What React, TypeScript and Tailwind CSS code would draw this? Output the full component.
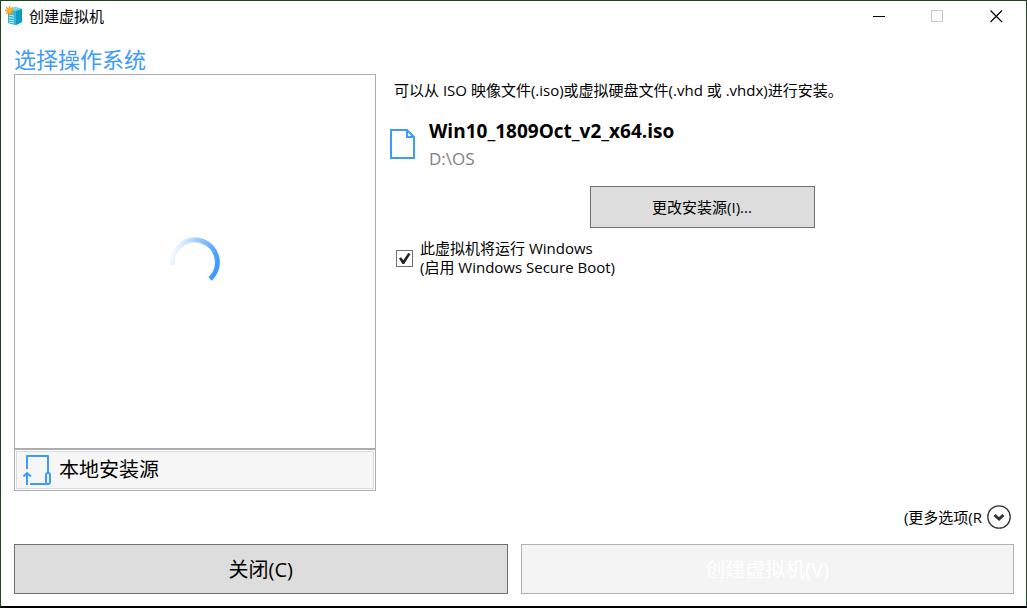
import React, { useState } from "react";

function AppIcon() {
  return (
    <svg width="18" height="20" viewBox="0 0 18 20" aria-hidden="true">
      <path d="M3 5 L10 1 L17 3 L17 16 L11 19 L3 17Z" fill="#22b8d8" />
      <path d="M10 1 L17 3 L11 5 L4 3.500Z" fill="#6fdcee" />
      <path d="M11 5 L17 3 L17 16 L11 19Z" fill="#0a9cc0" />
      <path d="M3 4 L11 5 L11 19 L3 17Z" fill="#35b4d6" />
      <path d="M4 9 L9 10 M4 11.500 L9 12.500 M4 14 L9 15 M4 16 L9 17" stroke="#c5eef7" strokeWidth="1" />
      <path d="M4.500 0 V9 M0 4.500 H9 M1.300 1.300 L7.700 7.700 M7.700 1.300 L1.300 7.700" stroke="#f59d12" strokeWidth="1.300" />
      <circle cx="4.500" cy="4.500" r="2.300" fill="#ffb52e" />
    </svg>
  );
}

function Spinner() {
  return (
    <svg width="50" height="50" viewBox="0 0 50 50" role="img" aria-label="正在加载">
      <defs>
        <linearGradient id="arc" x1="0" y1="0.35" x2="1" y2="0.65">
          <stop offset="0" stopColor="#3d9aff" stopOpacity="0.04" />
          <stop offset="0.4" stopColor="#3d9aff" stopOpacity="0.5" />
          <stop offset="1" stopColor="#3d9aff" />
        </linearGradient>
      </defs>
      <path d="M2.500 28 A22.500 22.500 0 1 1 40 42" fill="none" stroke="url(#arc)" strokeWidth="5" />
    </svg>
  );
}

function InstallIcon() {
  return (
    <svg width="28" height="32" viewBox="0 0 28 32" fill="none" stroke="#3d9aff" strokeWidth="2" aria-hidden="true">
      <path d="M4 15 V2 H25 V19" strokeLinejoin="round" />
      <path d="M7 30 H24" />
      <rect x="23" y="19" width="4" height="11" rx="2" />
      <path d="M4 31 V19 M0.500 22.500 L4 19 L8 22.500" />
    </svg>
  );
}

function FileIcon() {
  return (
    <svg width="26" height="32" viewBox="0 0 26 32" fill="none" stroke="#3d9aff" strokeWidth="2" aria-hidden="true">
      <path d="M1 1 H17 L24 8 V29 H1Z" />
      <path d="M17 1 V8 H24" />
    </svg>
  );
}

function TitleBar() {
  return (
    <header className="flex h-[30px] items-center justify-between pl-1">
      <div className="flex items-center gap-1.5">
        <AppIcon />
        <h1 className="text-[15px] leading-5">创建虚拟机</h1>
      </div>
      <div className="flex h-full">
        <button type="button" aria-label="最小化" className="flex w-[58px] items-center justify-center">
          <svg width="13" height="13" viewBox="0 0 13 13" aria-hidden="true">
            <path d="M0 6.500 H12" stroke="#000" />
          </svg>
        </button>
        <button type="button" aria-label="最大化" disabled className="flex w-[58px] items-center justify-center">
          <svg width="13" height="13" viewBox="0 0 13 13" fill="none" aria-hidden="true">
            <rect x="0.500" y="0.500" width="11" height="11" stroke="#c8c8c8" />
          </svg>
        </button>
        <button type="button" aria-label="关闭窗口" className="flex w-[60px] items-center justify-center">
          <svg width="13" height="13" viewBox="0 0 13 13" aria-hidden="true">
            <path d="M0.500 0.500 L12 12 M12 0.500 L0.500 12" stroke="#000" strokeWidth="1.200" />
          </svg>
        </button>
      </div>
    </header>
  );
}

function SourceList() {
  return (
    <section className="flex w-[362px] shrink-0 flex-col">
      <div className="flex flex-1 items-center justify-center border border-[#abadb3]">
        <Spinner />
      </div>
      <div className="border border-[#abadb3] p-px">
        <button
          type="button"
          className="flex w-full items-center gap-2 border border-[#dadada] bg-[#f6f6f6] px-1.5 py-px text-left text-[20px] leading-[34px]"
        >
          <InstallIcon />
          本地安装源
        </button>
      </div>
    </section>
  );
}

function SourceDetails() {
  const [windows, setWindows] = useState(true);
  return (
    <section className="flex flex-1 flex-col pl-3.5">
      <p className="mt-1.5 pl-1 text-[15px] leading-5">
        可以从 ISO 映像文件(.iso)或虚拟硬盘文件(.vhd 或 .vhdx)进行安装。
      </p>
      <div className="mt-[17px] flex items-center gap-[13px]">
        <FileIcon />
        <div>
          <p className="text-[19px] leading-7 font-bold">Win10_1809Oct_v2_x64.iso</p>
          <p className="text-[17px] leading-7 text-[#808080]">D:\OS</p>
        </div>
      </div>
      <div className="mt-[13px] flex justify-center">
        <button type="button" className="h-[42px] w-[225px] border border-[#707070] bg-[#dddddd] text-[15px]">
          更改安装源(I)...
        </button>
      </div>
      <label className="mt-[11px] flex items-center gap-[7px] self-start pl-1.5 text-[15px] leading-[19px]">
        <span className="grid shrink-0">
          <input
            type="checkbox"
            checked={windows}
            onChange={(e) => setWindows(e.target.checked)}
            className="peer col-start-1 row-start-1 size-[17px] appearance-none border border-[#707070] bg-white"
          />
          <svg
            viewBox="0 0 17 17"
            className="pointer-events-none invisible col-start-1 row-start-1 size-[17px] peer-checked:visible"
            aria-hidden="true"
          >
            <path d="M3 8.500 L5 7.300 L7.400 10.200 L12.200 3 L14.500 4 L8.200 14 L6.500 14Z" fill="#212121" />
          </svg>
        </span>
        <span>
          此虚拟机将运行 Windows
          <br />
          (启用 Windows Secure Boot)
        </span>
      </label>
    </section>
  );
}

export default function App() {
  return (
    <div className="flex min-h-screen flex-col border border-b-2 border-[#1d4420] border-b-black bg-white font-['Open_Sans','Noto_Sans_CJK_SC',sans-serif] font-[390] text-black">
      <TitleBar />
      <main className="flex flex-1 flex-col pr-3 pb-3 pl-[13px]">
        <h2 className="mt-3.5 text-[22px] leading-[29px] text-[#3d9aff]">选择操作系统</h2>
        <div className="flex flex-1">
          <SourceList />
          <SourceDetails />
        </div>
        <div className="mt-3 flex justify-end">
          <button type="button" className="flex items-center gap-1 pr-0.5 text-[15px] leading-7">
            (更多选项(R
            <svg width="26" height="26" viewBox="0 0 26 26" fill="none" stroke="#333" aria-hidden="true">
              <circle cx="13" cy="13" r="11.200" strokeWidth="1.300" />
              <path d="M8.500 11 L13 15 L17.500 11" strokeWidth="3" />
            </svg>
          </button>
        </div>
        <div className="mt-[13px] grid grid-cols-2 gap-[13px] text-[20px]">
          <button type="button" className="h-[50px] border border-[#707070] bg-[#dddddd] pt-0.5">
            关闭(C)
          </button>
          <button type="button" disabled className="h-[50px] border border-[#adb2b5] bg-[#f4f4f4] pt-0.5 text-white">
            创建虚拟机(V)
          </button>
        </div>
      </main>
    </div>
  );
}
